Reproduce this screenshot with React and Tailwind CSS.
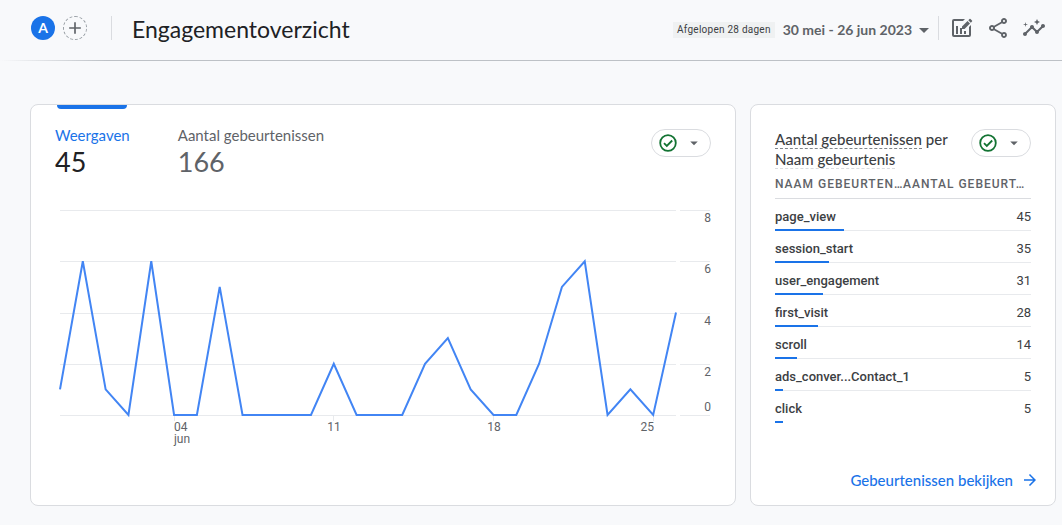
import { useState } from "react";
import { MdAdd, MdArrowDropDown, MdArrowForward, MdInsights, MdOutlineShare } from "react-icons/md";

const views = [
  1, 6, 1, 0, 6, 0, 0, 5, 0, 0, 0, 0, 2, 0, 0, 0, 2, 3, 1, 0, 0, 2, 5, 6, 0, 1,
  0, 4,
];

const metrics = [
  { name: "Weergaven", value: 45 },
  { name: "Aantal gebeurtenissen", value: 166 },
];

const events = [
  { name: "page_view", count: 45 },
  { name: "session_start", count: 35 },
  { name: "user_engagement", count: 31 },
  { name: "first_visit", count: 28 },
  { name: "scroll", count: 14 },
  { name: "ads_conver...Contact_1", count: 5 },
  { name: "click", count: 5 },
];

const TOTAL_EVENTS = 166;

// Pencil over a bar chart
function EditChartIcon() {
  return (
    <svg width="24" height="24" viewBox="0 0 24 24" fill="#5f6368">
      <path d="M15 3H4a2 2 0 0 0-2 2v14a2 2 0 0 0 2 2h15a2 2 0 0 0 2-2V9l-2 2v8H4V5h9z" />
      <path d="M6 10h2v8H6zM10 12h2v6h-2zM14 15h2v3h-2z" />
      <path d="M12 10.500V13h2.500L20 7.500 17.500 5zM18.300 4.200l2.500 2.500 1.200-1.200a.7.7 0 0 0 0-1l-1.500-1.500a.7.7 0 0 0-1 0z" />
    </svg>
  );
}

function StatusButton() {
  return (
    <button
      type="button"
      aria-label="Status"
      className="flex h-7 w-[60px] shrink-0 items-center justify-between rounded-full border border-[#dadce0] bg-white px-[7px]"
    >
      <svg width="18" height="18" viewBox="0 0 18 18" fill="none" stroke="#137333" strokeWidth="1.800">
        <circle cx="9" cy="9" r="7.800" />
        <path d="M5 9.200l2.800 2.800L13.200 6.500" />
      </svg>
      <MdArrowDropDown size={18} color="#5f6368" />
    </button>
  );
}

function Chart() {
  const x = (i) => 5 + (i * 616) / 27;
  const y = (v) => 215 - (v * 205) / 8;
  const yTicks = [
    { value: 8, labelY: 22 },
    { value: 6, labelY: 73 },
    { value: 4, labelY: 125 },
    { value: 2, labelY: 176 },
    { value: 0, labelY: 211 },
  ];

  return (
    <svg
      viewBox="0 0 656 250"
      className="w-full font-[Roboto,sans-serif] text-xs"
      fill="#5f6368"
    >
      {yTicks.map((t) => (
        <g key={t.value}>
          <path
            d={`M5 ${Math.round(y(t.value)) + 0.5}H621M625 ${Math.round(y(t.value)) + 0.5}H655`}
            stroke="#e8eaed"
          />
          <text x="656" y={t.labelY} textAnchor="end">
            {t.value}
          </text>
        </g>
      ))}
      {[5, 12, 19, 26].map((i) => (
        <path key={i} d={`M${Math.floor(x(i)) + 0.5} 216v5`} stroke="#e8eaed" />
      ))}
      <text x="119" y="231">04</text>
      <text x="119" y="243">jun</text>
      <text x="279" y="231" textAnchor="middle">11</text>
      <text x="439" y="231" textAnchor="middle">18</text>
      <text x="599" y="231" textAnchor="end">25</text>
      <polyline
        points={views.map((v, i) => `${x(i)},${y(v)}`).join(" ")}
        fill="none"
        stroke="#4285f4"
        strokeWidth="2"
      />
    </svg>
  );
}

export default function App() {
  const [active, setActive] = useState(0);

  return (
    <div className="min-h-screen bg-[#f8f9fb] font-[Lato,sans-serif] text-[#202124]">
      {/* Header */}
      <header>
        <div className="flex h-15 items-center pr-4 pl-[31px]">
          <button
            type="button"
            className="mb-1 flex size-6 items-center justify-center rounded-full bg-[#1a73e8] text-sm font-bold text-white"
          >
            A
          </button>
          <button
            type="button"
            aria-label="Vergelijking toevoegen"
            className="mb-1 ml-2 flex size-6 items-center justify-center rounded-full border border-dashed border-[#9aa0a6] text-[#5f6368]"
          >
            <MdAdd size={20} className="shrink-0" />
          </button>
          <div className="mr-5 mb-1 ml-6 h-6 w-px bg-[#dadce0]" />
          <h1 className="mb-0.5 text-[23px] leading-7">Engagementoverzicht</h1>

          <div className="ml-auto flex items-center">
            <button type="button" className="flex items-center text-[#5f6368]">
              <span className="mr-2 bg-[#eff1f2] px-1 font-[Roboto,sans-serif] text-[10px] leading-4 tracking-wide text-[#3c4043]">
                Afgelopen 28 dagen
              </span>
              <span className="text-sm font-bold">30 mei - 26 jun 2023</span>
              <MdArrowDropDown size={24} />
            </button>
            <div className="mb-1 ml-0.5 h-6 w-px bg-[#dadce0]" />
            <div className="mb-1 ml-[11px] flex items-center gap-3 text-[#5f6368]">
              <button type="button" aria-label="Rapport aanpassen">
                <EditChartIcon />
              </button>
              <button type="button" aria-label="Delen">
                <MdOutlineShare size={24} />
              </button>
              <button type="button" aria-label="Statistieken">
                <MdInsights size={24} />
              </button>
            </div>
          </div>
        </div>
        <div className="h-px bg-linear-to-r from-transparent to-[#bdc1c6] to-10%" />
      </header>

      <main className="flex gap-3.5 pt-[43px] pr-1.5 pb-5 pl-[30px]">
        {/* Views over time */}
        <section className="min-w-0 flex-1 rounded-lg border border-[#dadce0] bg-white px-6">
          <div className="flex items-start">
            {metrics.map((m, i) => (
              <button
                key={m.name}
                type="button"
                onClick={() => setActive(i)}
                className="mr-12 text-left"
              >
                <span
                  className={`ml-0.5 block h-1 w-[70px] rounded-b-sm ${
                    active === i ? "bg-[#1a73e8]" : "bg-transparent"
                  }`}
                />
                <span
                  className={`mt-4 block text-[15px] leading-5 ${
                    active === i ? "text-[#1a73e8]" : "text-[#5f6368]"
                  }`}
                >
                  {m.name}
                </span>
                <span
                  className={`block text-[27px] leading-[34px] ${
                    active === i ? "text-[#202124]" : "text-[#5f6368]"
                  }`}
                >
                  {m.value}
                </span>
              </button>
            ))}
            <div className="mt-6 ml-auto">
              <StatusButton />
            </div>
          </div>
          <div className="mt-[21px]">
            <Chart />
          </div>
        </section>

        {/* Events by name */}
        <section className="flex h-[402px] w-[306px] shrink-0 flex-col rounded-lg border border-[#dadce0] bg-white px-6 pt-6">
          <div className="flex items-start justify-between">
            <h2 className="text-[15px] leading-5 font-medium text-[#3c4043]">
              <span className="border-b border-dashed border-[#80868b]">
                Aantal gebeurtenissen
              </span>{" "}
              per
              <br />
              <span className="border-b border-dashed border-[#dadce0]">
                Naam gebeurtenis
              </span>
            </h2>
            <StatusButton />
          </div>

          <table className="w-full table-fixed border-separate border-spacing-0 font-[Roboto,sans-serif] text-[13px] text-[#3c4043]">
            <thead>
              <tr className="text-left text-xs tracking-[1px] whitespace-nowrap text-[#5f6368]">
                <th className="h-[30px] border-b border-[#dadce0] font-medium">
                  NAAM GEBEURTEN…
                </th>
                <th className="h-[30px] border-b border-[#dadce0] font-medium">
                  AANTAL GEBEURT…
                </th>
              </tr>
            </thead>
            <tbody>
              {events.map((e) => (
                <tr key={e.name} className="group relative">
                  <td className="h-8 border-b border-[#e8eaed] pt-1 font-medium group-last:border-transparent">
                    {e.name}
                    <span
                      className="absolute bottom-0 left-0 h-0.5 bg-[#1a73e8]"
                      style={{ width: `${(e.count / TOTAL_EVENTS) * 100}%` }}
                    />
                  </td>
                  <td className="h-8 border-b border-[#e8eaed] pt-1 text-right group-last:border-transparent">
                    {e.count}
                  </td>
                </tr>
              ))}
            </tbody>
          </table>

          <a
            href="#events"
            className="mt-auto mb-[15px] -mr-2 flex items-center gap-2 self-end text-[15px] leading-5 font-medium text-[#1a73e8]"
          >
            Gebeurtenissen bekijken
            <MdArrowForward size={18} />
          </a>
        </section>
      </main>
    </div>
  );
}
